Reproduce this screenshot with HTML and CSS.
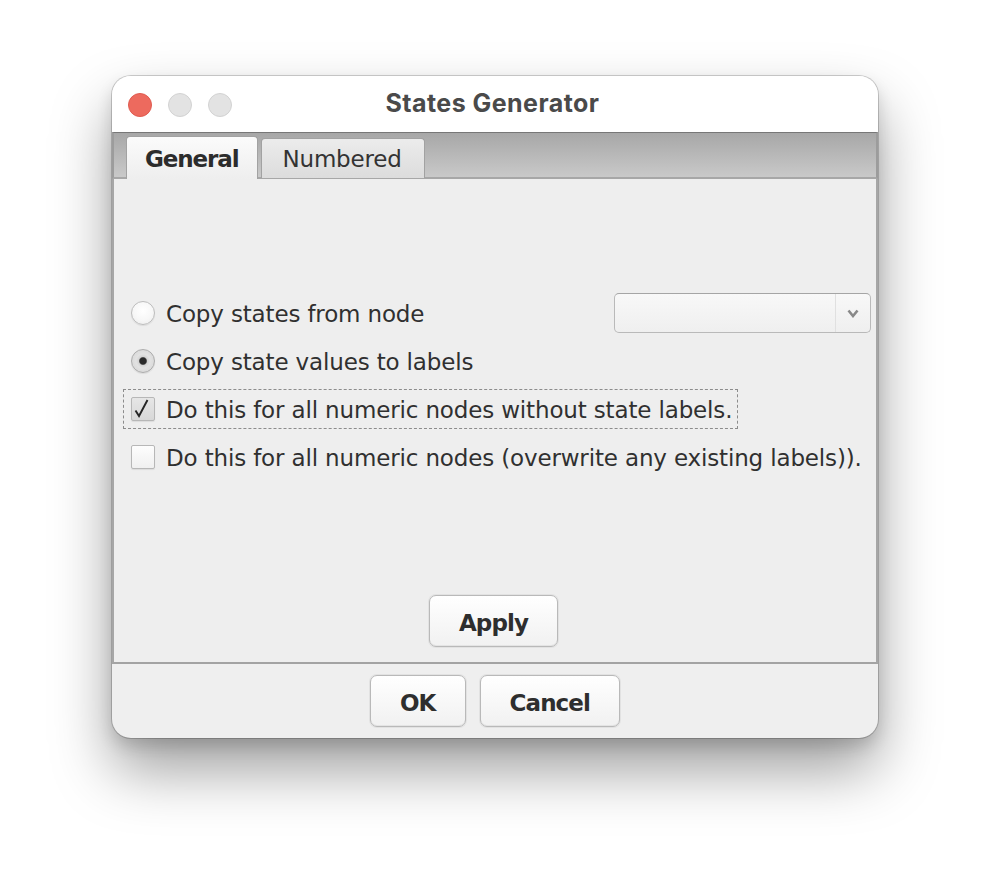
FILE: index.html
```html
<!DOCTYPE html>
<html>
<head>
<meta charset="utf-8">
<title>States Generator</title>
<link rel="stylesheet" href="styles.css">
</head>
<body>
<div class="window">
  <div class="titlebar">
    <div class="lights">
      <span class="light red"></span>
      <span class="light"></span>
      <span class="light"></span>
    </div>
    <div class="title">States Generator</div>
    <div></div>
  </div>
  <div class="tabstrip">
    <div class="tab active">General</div>
    <div class="tab">Numbered</div>
  </div>
  <div class="panel">
    <div class="rows">
      <div class="row">
        <div class="opt"><span class="radio"></span><span class="lbl">Copy states from node</span></div>
        <div class="combo">
          <span class="combo-field"></span>
          <span class="combo-arrow"><svg width="12" height="9" viewBox="0 0 12 9"><path d="M1.5 1.5 L6 7 L10.5 1.5" fill="none" stroke="#888888" stroke-width="2.6"/></svg></span>
        </div>
      </div>
      <div class="row">
        <div class="opt"><span class="radio on"></span><span class="lbl">Copy state values to labels</span></div>
      </div>
      <div class="row">
        <div class="opt focus"><span class="check on"><svg width="24" height="24" viewBox="0 0 24 24"><path d="M4.5 13.5 L8 19 L16.5 3" fill="none" stroke="#262626" stroke-width="1.9"/></svg></span><span class="lbl">Do this for all numeric nodes without state labels.</span></div>
      </div>
      <div class="row">
        <div class="opt"><span class="check"></span><span class="lbl">Do this for all numeric nodes (overwrite any existing labels)).</span></div>
      </div>
    </div>
    <div class="apply-wrap"><button class="btn">Apply</button></div>
  </div>
  <div class="footer">
    <button class="btn">OK</button>
    <button class="btn">Cancel</button>
  </div>
</div>
</body>
</html>
```
FILE: styles.css
```css
html, body {
  margin: 0;
  padding: 0;
  background: #ffffff;
}
body {
  font-family: "DejaVu Sans", "Liberation Sans", sans-serif;
  color: #303030;
  padding-top: 76px;
  min-height: 886px;
  box-sizing: border-box;
}
.window {
  width: 766px;
  height: 662px;
  margin: 0 auto;
  display: flex;
  flex-direction: column;
  border-radius: 19px;
  overflow: hidden;
  background: #efefef;
  box-shadow: 0 0 0 1px rgba(0,0,0,0.18), 0 32px 60px rgba(0,0,0,0.38), 0 8px 16px rgba(0,0,0,0.14);
}
.titlebar {
  height: 56px;
  flex: none;
  background: #ffffff;
  display: grid;
  grid-template-columns: 1fr auto 1fr;
  align-items: center;
}
.lights {
  display: flex;
  gap: 16px;
  padding-left: 16px;
  padding-top: 1px;
}
.light {
  width: 22px;
  height: 22px;
  border-radius: 50%;
  background: #e3e3e3;
  border: 1px solid #d2d2d2;
}
.light.red {
  background: #ed6a5e;
  border-color: #df5b50;
}
.title {
  font-family: "Inter", "DejaVu Sans", sans-serif;
  font-weight: 700;
  font-size: 25px;
  letter-spacing: 0.45px;
  color: #4a4a4a;
  margin-left: -5px;
  margin-top: -2px;
}
.tabstrip {
  height: 47px;
  box-sizing: border-box;
  flex: none;
  border-top: 1px solid #777777;
  border-bottom: 2px solid #a7a7a7;
  border-left: 2px solid #9c9c9c;
  border-right: 2px solid #9c9c9c;
  background: linear-gradient(#a7a7a7, #c9c9c9);
  display: flex;
  align-items: flex-end;
  padding-left: 12px;
  gap: 3px;
}
.tab {
  height: 40px;
  box-sizing: border-box;
  margin-bottom: -1px;
  padding: 1px 22px 0 21px;
  border: 1px solid #a2a2a2;
  border-bottom: none;
  border-radius: 4px 4px 0 0;
  background: linear-gradient(#ececec, #dcdcdc);
  display: flex;
  align-items: center;
  font-size: 23px;
  letter-spacing: -0.2px;
  color: #333;
}
.tab.active {
  height: 43px;
  margin-bottom: -2px;
  padding: 1px 18px 0 18px;
  background: linear-gradient(#fbfbfb, #eeeeee);
  font-weight: 700;
  letter-spacing: -1.1px;
  color: #2c2c2c;
}
.panel {
  flex: 1;
  display: flex;
  flex-direction: column;
  background: #eeeeee;
  border-left: 2px solid #a6a6a6;
  border-right: 2px solid #a6a6a6;
  border-bottom: 2px solid #a3a3a3;
}
.rows {
  padding: 110px 5px 0 9px;
  display: flex;
  flex-direction: column;
}
.row {
  height: 48px;
  display: flex;
  align-items: center;
}
.opt {
  height: 40px;
  box-sizing: border-box;
  display: inline-flex;
  align-items: center;
  gap: 11px;
  padding: 0 5px 0 7px;
  border: 1px dashed transparent;
  font-size: 23px;
  letter-spacing: -0.15px;
  color: #303030;
  white-space: nowrap;
}
.lbl {
  padding-top: 1px;
}
.opt.focus {
  border-color: #8c8c8c;
}
.radio {
  width: 24px;
  height: 24px;
  box-sizing: border-box;
  border-radius: 50%;
  border: 1px solid #bdbdbd;
  background: radial-gradient(circle at 50% 40%, #ffffff 0, #f7f7f7 55%, #e9e9e9 100%);
  box-shadow: 0 1px 1px rgba(0,0,0,0.08);
  flex: none;
}
.radio.on {
  border-color: #acacac;
  background: radial-gradient(circle, #2a2a2a 0, #2a2a2a 3.2px, #d4d4d4 4.4px, #e2e2e2 7px, #d2d2d2 100%);
}
.check {
  width: 24px;
  height: 24px;
  box-sizing: border-box;
  border: 1px solid #b7b7b7;
  border-radius: 2px;
  background: linear-gradient(#fdfdfd, #f0f0f0);
  box-shadow: 0 1px 1px rgba(0,0,0,0.08);
  flex: none;
  display: flex;
}
.check.on {
  background: linear-gradient(#e6e6e6, #d8d8d8);
}
.check svg {
  margin: -1px;
  overflow: visible;
}
.combo {
  margin-left: auto;
  width: 257px;
  height: 40px;
  box-sizing: border-box;
  border: 1px solid #b9b9b9;
  border-top-color: #a5a5a5;
  border-radius: 5px;
  background: linear-gradient(#f8f8f8, #efefef);
  display: flex;
}
.combo-field {
  flex: 1;
}
.combo-arrow {
  width: 34px;
  border-left: 1px solid #e0e0e0;
  display: flex;
  align-items: center;
  justify-content: center;
}
.apply-wrap {
  margin-top: auto;
  padding-bottom: 15px;
  display: flex;
  justify-content: center;
}
.btn {
  height: 52px;
  box-sizing: border-box;
  padding: 4px 29px 0;
  font-family: "DejaVu Sans", sans-serif;
  font-size: 23px;
  font-weight: 700;
  letter-spacing: -0.9px;
  color: #2e2e2e;
  background: linear-gradient(#ffffff, #f1f1f1);
  border: 1px solid #b9b9b9;
  border-radius: 7px;
  box-shadow: 0 0 0 1px #e2e2e2, inset 0 -1px 0 #e4e4e4;
}
.apply-wrap .btn {
  margin-left: -3px;
}
.footer {
  height: 74px;
  flex: none;
  box-sizing: border-box;
  padding-top: 11px;
  display: flex;
  justify-content: center;
  gap: 14px;
}
```
